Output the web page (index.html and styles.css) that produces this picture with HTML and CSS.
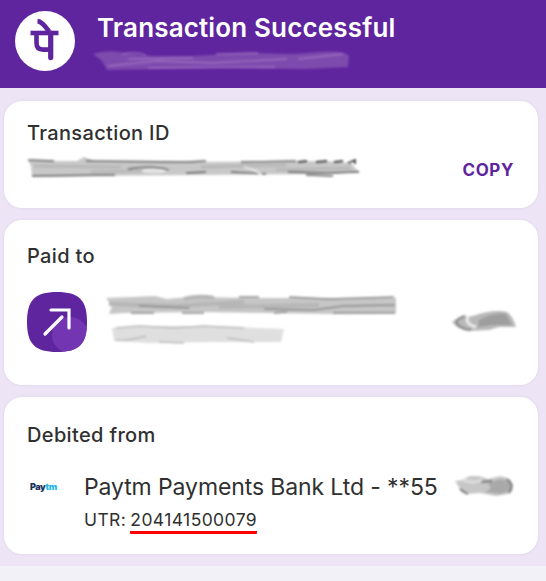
FILE: index.html
```html
<!DOCTYPE html>
<html lang="en">
<head>
<meta charset="utf-8">
<title>Transaction Successful</title>
<link rel="stylesheet" href="styles.css">
</head>
<body>
<header class="header">
  <svg class="logo" viewBox="0 0 60 60" aria-label="PhonePe">
    <circle cx="30" cy="30" r="30" fill="#fff"/>
    <g fill="none" stroke="#5f259f" stroke-linejoin="round">
      <path d="M15.5 22H43.5" stroke-width="4.6"/>
      <path d="M35.7 22V46.6" stroke-width="5.2" stroke-linecap="round"/>
      <path d="M21.5 22V32Q21.5 38.6 28 38.6H36" stroke-width="4.6"/>
      <path d="M22.5 10.2Q27 10.5 34 20.5" stroke-width="4.8"/>
    </g>
  </svg>
  <div class="header-copy">
    <h1>Transaction Successful</h1>
    <svg class="smudge header-smudge" viewBox="0 0 262 24">
      <path d="M0 5Q15 0 32 4L60 7L100 7L153 4L200 5L227 3Q252 1 256 7L255 18L213 20L120 19L14 21L9 12Z" fill="#7d4bad"/>
      <path d="M29 5Q43 2 53 6M15 17L65 12L120 14L194 10M55 19L182 18M123 5L165 4M205 10L250 5M35 10L100 9" stroke="#ab80c8" stroke-width="1.3" fill="none" opacity=".7"/>
    </svg>
  </div>
</header>
<main class="content">
  <section class="card transaction">
    <h2>Transaction ID</h2>
    <div class="transaction-row">
      <svg class="smudge transaction-smudge" viewBox="0 0 340 28">
        <path d="M2 6L30 7L51 7L58 3L69 7L155 8L300 7L325 9L329 14L334 18L309 20L170 21L65 22L6 23L5 12Z" fill="#c8c8c8"/>
        <path d="M8 12L95 13M65 18L115 17M175 13L260 11M250 16L325 14" stroke="#b8b8b8" stroke-width="3" fill="none"/>
        <path d="M2 6L28 7M60 7L160 8L180 7M215 8L270 7M102 15Q128 11 143 16M160 19L180 18M6 22L89 21M205 18L240 20M262 18L300 19L333 18M280 21L307 22" stroke="#666" stroke-width="1.3" fill="none"/>
        <path d="M117 17Q127 14 139 17Q129 19 117 17M218 13Q228 15 236 21" stroke="#f2f2f2" stroke-width="1.6" fill="none"/>
        <path d="M272 8L281 7M290 8L301 7M308 8L317 7M322 9L329 6L329 10" stroke="#444" stroke-width="1.8" fill="none"/>
      </svg>
      <span class="copy">COPY</span>
    </div>
  </section>
  <section class="card paid">
    <h2>Paid to</h2>
    <div class="payee-row">
      <svg class="transfer" viewBox="0 0 60 60">
        <defs><clipPath id="transfer-shape"><path d="M30 0C52 0 60 8 60 30S52 60 30 60S0 52 0 30S8 0 30 0Z"/></clipPath></defs>
        <g clip-path="url(#transfer-shape)">
          <rect width="60" height="60" fill="#5f259f"/>
          <circle cx="43" cy="43" r="18" fill="#7335b1"/>
        </g>
        <path d="M18 42L35 25M24 18H42V36" fill="none" stroke="#fff" stroke-width="3.2" stroke-linecap="round"/>
      </svg>
      <svg class="smudge payee-smudge" viewBox="0 0 300 60">
        <path d="M2 6L28 5L51 4L63 7L85 5L155 6L292 6L292 21L225 22L95 20L20 21L5 22L8 14Z" fill="#c6c6c6"/>
        <path d="M5 12L70 14L140 10M80 7Q95 3 110 6M115 15L215 13" stroke="#b6b6b6" stroke-width="4" fill="none"/>
        <path d="M35 14L85 16M135 5L155 5M185 5L225 7L290 5M160 17L210 18L239 14L291 13M229 21L291 21M27 21L50 21M78 21L100 21M170 21L183 20" stroke="#8c8c8c" stroke-width="1.5" fill="none"/>
        <path d="M8 36L35 34L100 34L180 37L177 50L110 50L45 51L10 49Z" fill="#dfdfdf"/>
        <path d="M12 36L35 34L70 36L100 34L140 36M12 48Q25 49 42 44M55 50L80 51M123 46L150 50" stroke="#bcbcbc" stroke-width="1.4" fill="none"/>
      </svg>
      <svg class="smudge amount-smudge" viewBox="0 0 72 30">
        <path d="M1 15Q8 8 22 9Q42 2 56 5Q62 9 65 20L48 20L38 23L18 24Q7 23 1 15Z" fill="#b9b9b9"/>
        <path d="M28 13Q44 5 55 7L61 18L42 18L27 20Z" fill="#9e9e9e"/>
        <path d="M14 9Q2 13 7 18Q13 23 20 23" stroke="#888" stroke-width="2" fill="none"/>
        <path d="M18 9Q12 16 25 20" stroke="#ededed" stroke-width="3" fill="none"/>
      </svg>
    </div>
  </section>
  <section class="card debit">
    <h2>Debited from</h2>
    <div class="bank-row">
      <span class="paytm">Pay<span>tm</span></span>
      <div class="bank-details">
        <span class="bank">Paytm Payments Bank Ltd - **55</span>
        <span class="utr">UTR: <span>204141500079</span></span>
      </div>
      <svg class="smudge bank-smudge" viewBox="0 0 62 28">
        <path d="M1 9L8 8L16 4L25 4L34 7L46 4Q58 6 59 13Q59 21 54 22L42 24L26 21L13 22L6 17Z" fill="#c7c7c7"/>
        <path d="M34 12Q46 4 56 10L56 19L46 22L30 20Q40 17 34 12Z" fill="#a9a9a9"/>
        <path d="M6 17Q9 20 14 22M53 7Q61 13 55 21M27 10L38 9" stroke="#777" stroke-width="1.8" fill="none"/>
        <path d="M9 8Q20 12 28 8" stroke="#dedede" stroke-width="3" fill="none"/>
      </svg>
    </div>
  </section>
</main>
</body>
</html>
```
FILE: styles.css
```css
* { box-sizing: border-box; }
body {
  margin: 0;
  background: #f3f1f8;
  color: #303030;
  font-family: Inter, "Liberation Sans", sans-serif;
}
h1, h2 { margin: 0; }
svg { display: block; flex: none; }
.header {
  display: flex;
  height: 88px;
  padding: 11px 15px;
  background: #5f259f;
}
.logo { width: 60px; height: 60px; }
.header-copy { padding-left: 22px; }
h1 {
  color: #fff;
  font-size: 26px;
  line-height: 33px;
  font-weight: 600;
  letter-spacing: .15px;
  white-space: nowrap;
}
.header-smudge { width: 262px; height: 24px; margin: 5px 0 0 -4px; }
.smudge { filter: blur(1.2px); }
.content {
  display: flex;
  flex-direction: column;
  gap: 12px;
  height: 478px;
  padding: 13px 8px 12px 4px;
  background: #ede5f6;
}
.card {
  flex: none;
  border-radius: 18px;
  background: #fff;
  padding-left: 23px;
  box-shadow: 0 0 3px rgba(73, 43, 94, .1);
}
h2 {
  font-size: 20px;
  line-height: 24px;
  font-weight: 500;
  letter-spacing: .35px;
  white-space: nowrap;
}
.transaction { height: 107px; padding-top: 20px; }
.transaction-row {
  display: flex;
  align-items: flex-start;
  justify-content: space-between;
  padding: 9px 24px 0 0;
}
.transaction-smudge { width: 340px; height: 28px; margin-left: -1px; }
.copy { margin-top: 4px; color: #5f259f; font-size: 17px; line-height: 24px; font-weight: 700; letter-spacing: .6px; }
.paid { height: 165px; padding-top: 24px; }
.payee-row { display: flex; padding-top: 24px; }
.transfer { width: 60px; height: 60px; }
.payee-smudge { width: 300px; height: 60px; margin-left: 17px; }
.amount-smudge { width: 72px; height: 30px; margin: 15px 0 0 47px; }
.debit { height: 157px; padding-top: 26px; }
.bank-row { display: flex; padding-top: 25px; }
.paytm {
  width: 57px;
  padding: 9px 0 0 3px;
  color: #16345f;
  font-size: 9px;
  line-height: 12px;
  font-weight: 900;
  letter-spacing: -.4px;
}
.paytm span { color: #28b8e5; }
.bank-details { display: flex; flex-direction: column; width: 370px; }
.bank { font-size: 23px; line-height: 30px; letter-spacing: -.11px; white-space: nowrap; }
.utr { margin-top: 6px; font-size: 17.5px; line-height: 24px; letter-spacing: .4px; word-spacing: -1.2px; white-space: nowrap; }
.utr span { display: inline-block; height: 26px; border-bottom: 3px solid #fe0000; border-radius: 1px; }
.bank-smudge { width: 62px; height: 28px; margin-top: 0; }
```
